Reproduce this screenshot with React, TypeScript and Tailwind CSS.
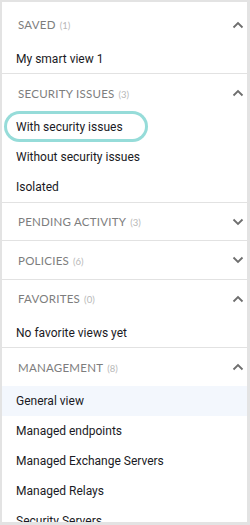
import { ReactNode } from 'react'

interface SectionProps {
  title: string
  count: number
  open: boolean
  first?: boolean
  children?: ReactNode
}

function Chevron({ open }: { open: boolean }) {
  return (
    <svg width="12" height="8" viewBox="0 0 12 8" className="text-[#6e6e6e]">
      {open ? (
        <polyline points="1.5,6.5 6,2 10.5,6.5" fill="none" stroke="currentColor" strokeWidth="1.8" />
      ) : (
        <polyline points="1.5,1.5 6,6 10.5,1.5" fill="none" stroke="currentColor" strokeWidth="1.8" />
      )}
    </svg>
  )
}

function Section({ title, count, open, first, children }: SectionProps) {
  return (
    <div className={`border-b border-[#e2e2e2] ${first ? 'pt-[3.5px]' : ''}`}>
      <div className="h-[37.5px] flex items-center justify-between pl-[16px] pr-[3px] pt-[1px]">
        <div className="flex items-baseline gap-[4px] font-['Lato',sans-serif]">
          <span className="text-[11.5px] tracking-[0.25px] text-[#7d7d7d]">{title}</span>
          <span className="text-[9.5px] text-[#b8b8b8]">({count})</span>
        </div>
        <Chevron open={open} />
      </div>
      {open && children}
    </div>
  )
}

function Item({ label, active, focused }: { label: string; active?: boolean; focused?: boolean }) {
  if (focused) {
    return (
      <div className="h-[30px] flex items-center">
        <div className="ml-[5px] w-[138px] h-[25px] pl-[9px] flex items-center rounded-[14px] ring-[3px] ring-[#96dcd9] text-[12px] text-[#1a1a24]">
          {label}
        </div>
      </div>
    )
  }
  return (
    <div
      className={`h-[30px] flex items-center pl-[14px] pt-[1px] text-[12px] text-[#1a1a24] ${
        active ? 'bg-[#f3f7fd]' : ''
      }`}
    >
      {label}
    </div>
  )
}

export default function App() {
  return (
    <div className="w-[250px] h-[525px] bg-[#e3e3e3] pl-[2px] pt-[2px] pr-[3px] pb-[3px] font-['Roboto',sans-serif]">
      <div className="w-full h-full bg-white overflow-hidden">
        <Section title="SAVED" count={1} open first>
          <Item label="My smart view 1" />
        </Section>
        <Section title="SECURITY ISSUES" count={3} open>
          <Item label="With security issues" focused />
          <Item label="Without security issues" />
          <Item label="Isolated" />
        </Section>
        <Section title="PENDING ACTIVITY" count={3} open={false} />
        <Section title="POLICIES" count={6} open={false} />
        <Section title="FAVORITES" count={0} open>
          <Item label="No favorite views yet" />
        </Section>
        <Section title="MANAGEMENT" count={8} open>
          <Item label="General view" active />
          <Item label="Managed endpoints" />
          <Item label="Managed Exchange Servers" />
          <Item label="Managed Relays" />
          <Item label="Security Servers" />
        </Section>
      </div>
    </div>
  )
}
